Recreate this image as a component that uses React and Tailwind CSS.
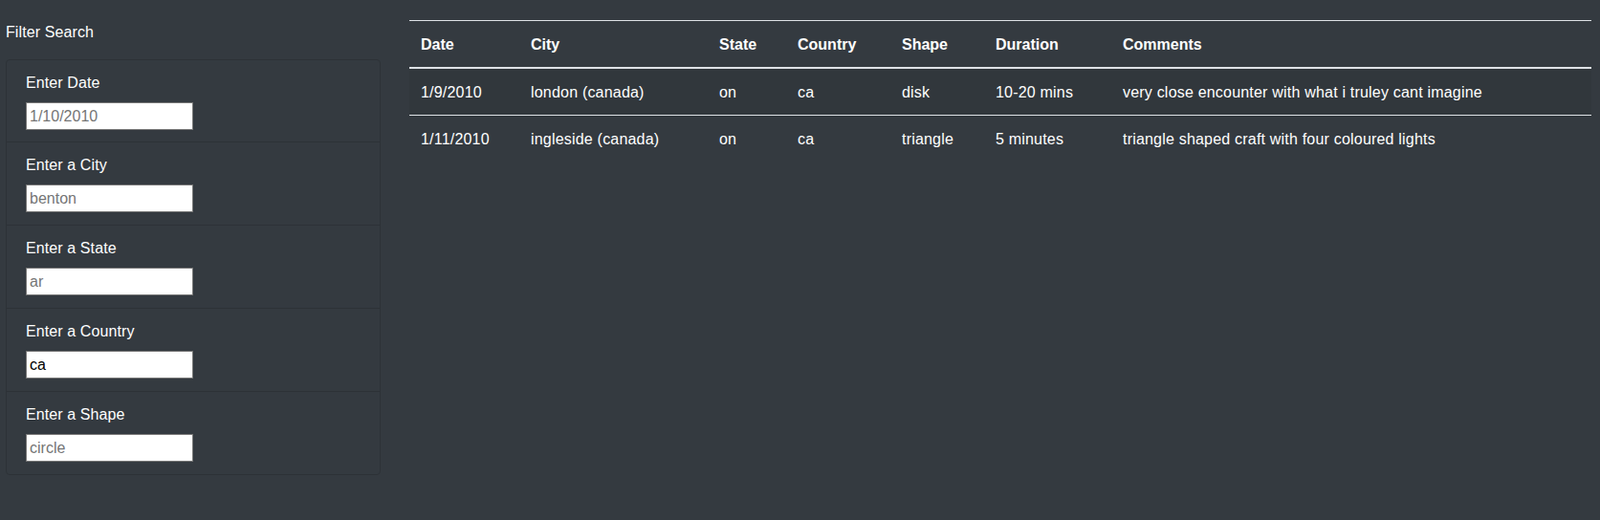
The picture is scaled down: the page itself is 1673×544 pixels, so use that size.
import { useState } from "react";

const filters = [
  { id: "datetime", label: "Enter Date", placeholder: "1/10/2010" },
  { id: "city", label: "Enter a City", placeholder: "benton" },
  { id: "state", label: "Enter a State", placeholder: "ar" },
  { id: "country", label: "Enter a Country", placeholder: "us" },
  { id: "shape", label: "Enter a Shape", placeholder: "circle" },
];

const rows = [
  {
    date: "1/9/2010",
    city: "london (canada)",
    state: "on",
    country: "ca",
    shape: "disk",
    duration: "10-20 mins",
    comments: "very close encounter with what i truley cant imagine",
  },
  {
    date: "1/11/2010",
    city: "ingleside (canada)",
    state: "on",
    country: "ca",
    shape: "triangle",
    duration: "5 minutes",
    comments: "triangle shaped craft with four coloured lights",
  },
];

const columns = [
  { key: "date", title: "Date", width: "w-[115px]" },
  { key: "city", title: "City", width: "w-[197px]" },
  { key: "state", title: "State", width: "w-[82px]" },
  { key: "country", title: "Country", width: "w-[109px]" },
  { key: "shape", title: "Shape", width: "w-[98px]" },
  { key: "duration", title: "Duration", width: "w-[133px]" },
  { key: "comments", title: "Comments", width: "w-[502px]" },
];

export default function App() {
  const [values, setValues] = useState({ country: "ca" });

  return (
    <div className="min-h-[544px] bg-[#343a40] text-white text-base leading-6 font-['Liberation_Sans',Arial,sans-serif] flex">

      {/* SIDEBAR */}
      <aside className="w-[398px] shrink-0 pl-[6px] pt-[22px]">
        <div className="text-white tracking-[0.1px]">Filter Search</div>

        <ul className="mt-[16px] border border-[#2d3237] rounded-[4px]">
          {filters.map((f, i) => (
            <li
              key={f.id}
              className={`px-5 pt-3 ${i > 0 ? "pb-[13px] border-t border-[#2d3237]" : "pb-3"}`}
            >
              <label htmlFor={f.id} className="block mb-2 tracking-[0.1px]">
                {f.label}
              </label>
              <input
                id={f.id}
                type="text"
                placeholder={f.placeholder}
                value={values[f.id] || ""}
                onChange={(e) => setValues({ ...values, [f.id]: e.target.value })}
                className="block w-[175px] h-[29px] bg-white border border-[#767676] px-[3px] text-black placeholder:text-[#757575] outline-none"
              />
            </li>
          ))}
        </ul>
      </aside>

      {/* RESULTS TABLE */}
      <main className="pl-[30px] pt-[21px]">
        <table className="table-fixed w-[1236px] border-collapse">
          <thead>
            <tr className="border-t border-[#dee2e6]">
              {columns.map((c) => (
                <th
                  key={c.key}
                  className={`${c.width} px-3 pt-[13px] pb-[11px] text-left font-bold border-b-2 border-[#dee2e6]`}
                >
                  {c.title}
                </th>
              ))}
            </tr>
          </thead>
          <tbody>
            {rows.map((r, i) => (
              <tr
                key={i}
                className={i % 2 === 0 ? "bg-[#31373c] border-b border-[#dee2e6]" : ""}
              >
                {columns.map((c) => (
                  <td key={c.key} className="px-3 pt-[13px] pb-[11px] whitespace-nowrap tracking-[0.2px]">
                    {r[c.key]}
                  </td>
                ))}
              </tr>
            ))}
          </tbody>
        </table>
      </main>

    </div>
  );
}
